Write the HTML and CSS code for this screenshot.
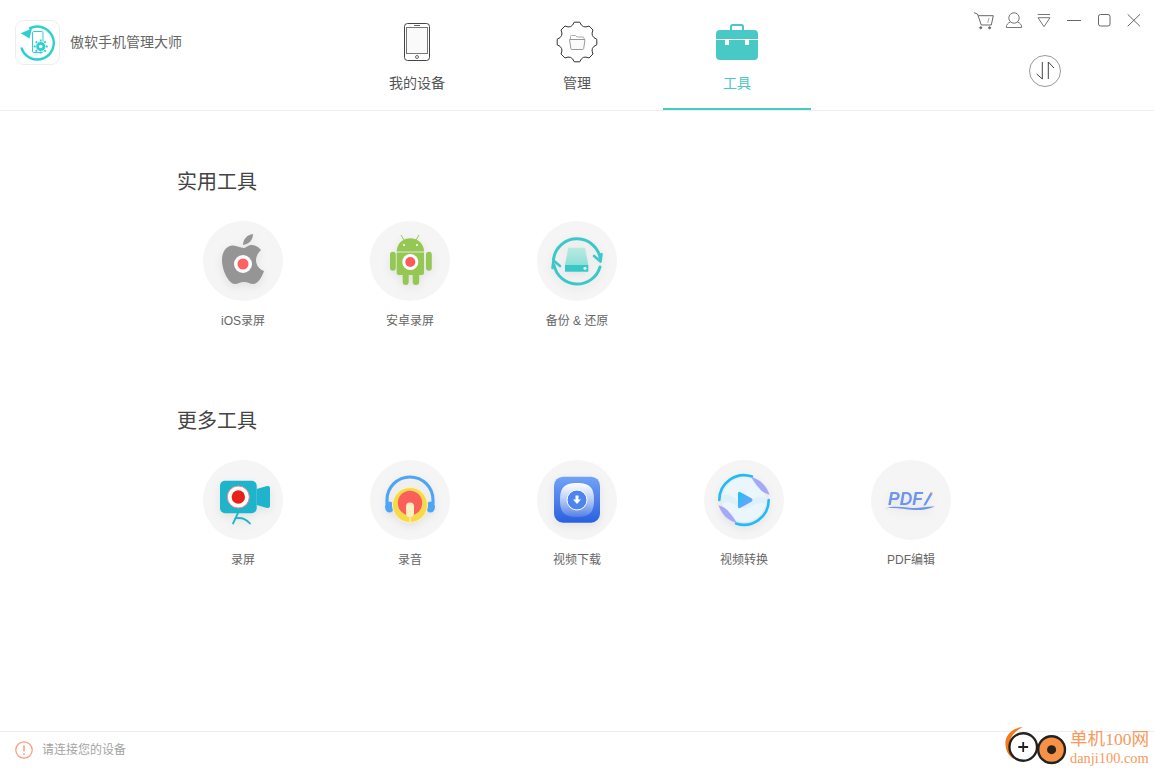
FILE: index.html
```html
<!DOCTYPE html>
<html lang="zh-CN">
<head>
    <meta charset="UTF-8">
    <title>傲软手机管理大师</title>
    <link rel="stylesheet" href="styles.css">
</head>
<body>

<div id="app">

    <!-- Top bar -->
    <header class="top-bar">
        <div class="brand">
            <div class="brand-logo">
                <svg width="45" height="45" viewBox="0 0 45 45" fill="none">
                    <path d="M15 8.2 A16.5 16.5 0 1 1 6.7 28.5" stroke="#2bd0d0" stroke-width="2.4" stroke-linecap="round"/>
                    <path d="M5.7 13.3 L17 8.5 L14.5 18.5 Z" fill="#2bd0d0"/>
                    <rect x="17.5" y="11.5" width="10.5" height="21" rx="1.2" stroke="#2bd0d0" stroke-width="1"/>
                    <circle cx="25.7" cy="26.5" r="5" fill="#2bd0d0" stroke="#fff" stroke-width="1"/>
                    <path d="M25.7 19.5v2M25.7 31.5v2M18.7 26.5h2M30.7 26.5h2M20.7 21.5l1.4 1.4M29.3 30.1l1.4 1.4M20.7 31.5l1.4-1.4M29.3 22.9l1.4-1.4" stroke="#2bd0d0" stroke-width="1.8"/>
                    <circle cx="25.7" cy="26.5" r="1.8" fill="#fff"/>
                </svg>
            </div>
            <span class="brand-name">傲软手机管理大师</span>
        </div>

        <nav class="tabs">
            <div class="tab">
                <svg class="tab-icon" viewBox="0 0 44 44" fill="none">
                    <rect x="9.5" y="3.5" width="25" height="37" rx="3" stroke="#444" stroke-width="1"/>
                    <rect x="11.5" y="7.5" width="21" height="26" fill="#fafafa" stroke="#777" stroke-width="1"/>
                    <path d="M19 5.5h6" stroke="#666" stroke-width="1"/>
                    <circle cx="22" cy="37" r="1.5" stroke="#666" stroke-width="1"/>
                </svg>
                <span>我的设备</span>
            </div>
            <div class="tab">
                <svg class="tab-icon" viewBox="0 0 44 44" fill="none">
                    <path d="M19.22 2.2 L24.78 2.2 Q27.36 9.06 34.04 6.03 L37.97 9.96 Q34.94 16.64 41.8 19.22 L41.8 24.78 Q34.94 27.36 37.97 34.04 L34.04 37.97 Q27.36 34.94 24.78 41.8 L19.22 41.8 Q16.64 34.94 9.96 37.97 L6.03 34.04 Q9.06 27.36 2.2 24.78 L2.2 19.22 Q9.06 16.64 6.03 9.96 L9.96 6.03 Q16.64 9.06 19.22 2.2 Z" fill="#fff" stroke="#333" stroke-width="1" stroke-linejoin="round"/>
                    <path d="M15.5 19 V16.5 Q15.5 15.5 16.5 15.5 H20.5 L22 17 H28 Q29 17 29 18 V19" stroke="#aaa" stroke-width="1"/>
                    <path d="M14.5 19.5 H30 L28.7 28.5 Q28.5 29.5 27.5 29.5 H17 Q16 29.5 15.8 28.5 Z" fill="#fafafa" stroke="#999" stroke-width="1" stroke-linejoin="round"/>
                </svg>
                <span>管理</span>
            </div>
            <div class="tab tab-active">
                <svg class="tab-icon" viewBox="0 0 44 44" fill="none">
                    <path d="M16 11 V6.5 Q16 5 17.5 5 H26.5 Q28 5 28 6.5 V11" stroke="#49c9c6" stroke-width="2"/>
                    <rect x="1" y="10" width="42" height="30" rx="4" fill="#49c9c6"/>
                    <path d="M1 19.5 H43" stroke="#fff" stroke-width="1"/>
                    <path d="M10 20h4v5h-4zM30 20h4v5h-4z" fill="#fff"/>
                </svg>
                <span>工具</span>
            </div>
        </nav>

        <div class="top-right">
            <div class="win-btns">
                <svg class="win-btn" viewBox="0 0 20 20" fill="none" stroke="#666" stroke-width="1">
                    <path d="M0 2.7 L3.5 4 L7.3 15 H17.3 L19.3 5.7 H4.4"/>
                    <path d="M15 8 L13.7 13" stroke="#aaa"/>
                    <circle cx="6.8" cy="17.8" r="1" fill="#666"/>
                    <circle cx="15.6" cy="17.8" r="1" fill="#666"/>
                </svg>
                <svg class="win-btn" viewBox="0 0 20 20" fill="none" stroke="#777" stroke-width="1">
                    <circle cx="10" cy="8" r="5.2"/>
                    <path d="M6.5 12 C4 13 2.3 14.5 2.3 17.5 H17.7 C17.7 14.5 16 13 13.5 12"/>
                </svg>
                <svg class="win-btn" viewBox="0 0 20 20" fill="none" stroke="#777" stroke-width="1">
                    <path d="M3.7 4.5 H16"/>
                    <path d="M4 7.7 H16 L10 16.7 Z"/>
                </svg>
                <svg class="win-btn" viewBox="0 0 20 20" fill="none" stroke="#666" stroke-width="1">
                    <path d="M3 10.5 H17"/>
                </svg>
                <svg class="win-btn" viewBox="0 0 20 20" fill="none" stroke="#666" stroke-width="1">
                    <rect x="4.5" y="4.5" width="11.5" height="11.5" rx="2"/>
                </svg>
                <svg class="win-btn" viewBox="0 0 20 20" fill="none" stroke="#666" stroke-width="1">
                    <path d="M3.7 4.3 L16 16.3 M16 4.3 L3.7 16.3"/>
                </svg>
            </div>
            <svg class="sync-btn" viewBox="0 0 32 32" fill="none">
                <circle cx="16" cy="16" r="15.5" stroke="#999" stroke-width="1"/>
                <path d="M13.3 7 V24 L7.7 19" stroke="#444" stroke-width="1"/>
                <path d="M19.3 24 V7 L25 13" stroke="#444" stroke-width="1"/>
            </svg>
        </div>
    </header>

    <!-- Tool lists -->
    <main class="content">
        <section class="tool-section">
            <h2 class="section-title">实用工具</h2>
            <div class="tool-grid">
                <div class="tool">
                    <div class="tool-circle">
                        <svg class="tool-icon" viewBox="0 0 80 80">
                            <path d="M41 27 C37 27 34 24.5 30 24.5 C23 24.5 19 31 19 39 C19 50 26 63 32 63 C35 63 37 61 41 61 C45 61 47 63 50 63 C55 63 59 56 61 50 C56 48 53 44 53 39 C53 35 55 32 58 29 C55 25 51 24 48 24 C45 24 43 27 41 27 Z" fill="#959595"/>
                            <path d="M40 24 C40 18 44 14 50 13 C50 19 46 23 40 24 Z" fill="#959595"/>
                            <circle cx="40" cy="43" r="9" fill="#fff"/>
                            <circle cx="40" cy="43" r="5.5" fill="#ff6060"/>
                        </svg>
                    </div>
                    <span class="tool-name">iOS录屏</span>
                </div>
                <div class="tool">
                    <div class="tool-circle">
                        <svg class="tool-icon" viewBox="0 0 80 80">
                            <path d="M31 14 L34 19 M49 14 L46 19" stroke="#95c753" stroke-width="1"/>
                            <path d="M26.7 30.5 C26.7 23 32.5 17.3 40.3 17.3 C48 17.3 54 23 54 30.5 Z" fill="#95c753"/>
                            <path d="M26.7 31.5 H54 V52 Q54 54 52 54 H28.7 Q26.7 54 26.7 52 Z" fill="#95c753"/>
                            <rect x="20" y="30.7" width="5.8" height="19" rx="2.9" fill="#95c753"/>
                            <rect x="56" y="30.7" width="5.8" height="19" rx="2.9" fill="#95c753"/>
                            <rect x="32.7" y="50" width="6" height="14" rx="3" fill="#95c753"/>
                            <rect x="42.7" y="50" width="6.5" height="14" rx="3" fill="#95c753"/>
                            <circle cx="34" cy="24" r="1" fill="#fff"/>
                            <circle cx="47" cy="24" r="1" fill="#fff"/>
                            <circle cx="40.3" cy="41" r="8" fill="#fff"/>
                            <circle cx="40.3" cy="41" r="5" fill="#ff5a5a"/>
                        </svg>
                    </div>
                    <span class="tool-name">安卓录屏</span>
                </div>
                <div class="tool">
                    <div class="tool-circle">
                        <svg class="tool-icon" viewBox="0 0 80 80" fill="none">
                            <defs>
                                <linearGradient id="driveTop" x1="0" y1="0" x2="0" y2="1">
                                    <stop offset="0" stop-color="#b8ebe4"/>
                                    <stop offset="1" stop-color="#8fdfd8"/>
                                </linearGradient>
                            </defs>
                            <path d="M16.5 38 A23.7 23.7 0 0 1 63.5 39" stroke="#3cc8c8" stroke-width="3" stroke-linecap="round"/>
                            <path d="M63 46 A23.7 23.7 0 0 1 17 44" stroke="#3cc8c8" stroke-width="3" stroke-linecap="round"/>
                            <path d="M57 35 L63.5 40.5 L64.5 33" stroke="#3cc8c8" stroke-width="2.6" stroke-linecap="round" stroke-linejoin="round"/>
                            <path d="M23 45 L16.5 39.5 L15.5 47" stroke="#3cc8c8" stroke-width="2.6" stroke-linecap="round" stroke-linejoin="round"/>
                            <path d="M31.3 26.7 H48 L51.3 44 H28 Z" fill="url(#driveTop)"/>
                            <rect x="28" y="44" width="23.3" height="6.7" fill="#35c8c8"/>
                            <circle cx="48" cy="47.3" r="1.5" fill="#fff"/>
                        </svg>
                    </div>
                    <span class="tool-name">备份 &amp; 还原</span>
                </div>
            </div>
        </section>

        <section class="tool-section">
            <h2 class="section-title">更多工具</h2>
            <div class="tool-grid">
                <div class="tool">
                    <div class="tool-circle">
                        <svg class="tool-icon" viewBox="0 0 80 80" fill="none">
                            <rect x="17" y="20.7" width="36.7" height="32.6" rx="5" fill="#1db4cc"/>
                            <path d="M53.7 29 L64 26 Q67 25.5 67 28 V46 Q67 48.5 64 48 L53.7 45 Z" fill="#1db4cc"/>
                            <circle cx="35.3" cy="37" r="11" fill="#fff" stroke="#e88a88" stroke-width="1"/>
                            <circle cx="35.3" cy="37" r="6.7" fill="#e8201a"/>
                            <path d="M35 53 L30 63.5 M32 58.5 C38 57 43 59 47 63.5" stroke="#1db4cc" stroke-width="1.8" stroke-linecap="round"/>
                        </svg>
                    </div>
                    <span class="tool-name">录屏</span>
                </div>
                <div class="tool">
                    <div class="tool-circle">
                        <svg class="tool-icon" viewBox="0 0 80 80" fill="none">
                            <path d="M17 44 V40 A23 23 0 0 1 63 40 V44" stroke="#4ea5f5" stroke-width="3.2"/>
                            <ellipse cx="19.5" cy="47" rx="4.5" ry="5.5" fill="#4ea5f5"/>
                            <ellipse cx="60.5" cy="47" rx="4.5" ry="5.5" fill="#4ea5f5"/>
                            <circle cx="40" cy="45" r="17.5" fill="#f7d94e" stroke="#fdf3b5" stroke-width="1"/>
                            <circle cx="40" cy="43" r="12.2" fill="#fa5f5a"/>
                            <rect x="36" y="42.5" width="8" height="14.5" rx="4" fill="#fdf0c0"/>
                            <path d="M40 56 V62" stroke="#fdf0c0" stroke-width="1.2"/>
                        </svg>
                    </div>
                    <span class="tool-name">录音</span>
                </div>
                <div class="tool">
                    <div class="tool-circle">
                        <svg class="tool-icon" viewBox="0 0 80 80" fill="none">
                            <defs>
                                <linearGradient id="dlBox" x1="0" y1="0" x2="0" y2="1">
                                    <stop offset="0" stop-color="#72a2f6"/>
                                    <stop offset="1" stop-color="#2a60df"/>
                                </linearGradient>
                                <linearGradient id="dlInner" x1="0" y1="0" x2="0" y2="1">
                                    <stop offset="0" stop-color="#fff"/>
                                    <stop offset="1" stop-color="#fff" stop-opacity="0.15"/>
                                </linearGradient>
                            </defs>
                            <rect x="17" y="16.7" width="46" height="46" rx="9" fill="url(#dlBox)"/>
                            <path d="M40 23 C53 23 57 28 57 40 C57 52 53 57 40 57 C27 57 23 52 23 40 C23 28 27 23 40 23 Z" fill="url(#dlInner)"/>
                            <circle cx="40" cy="40" r="10" fill="#4d84ee" stroke="#fff" stroke-width="1"/>
                            <path d="M38.5 35.5 H41.5 V39.5 H44 L40 44 L36 39.5 H38.5 Z" fill="#fff"/>
                        </svg>
                    </div>
                    <span class="tool-name">视频下载</span>
                </div>
                <div class="tool">
                    <div class="tool-circle">
                        <svg class="tool-icon" viewBox="0 0 80 80" fill="none">
                            <defs>
                                <linearGradient id="playFill" x1="0" y1="0" x2="1" y2="1">
                                    <stop offset="0" stop-color="#1ec0f8"/>
                                    <stop offset="1" stop-color="#7f9cf8"/>
                                </linearGradient>
                            </defs>
                            <circle cx="40" cy="40" r="22" fill="#eaf5fc"/>
                            <path d="M18 36 C26 30 32 44 42 42 C50 40 54 34 62 38 V44 C52 40 50 48 40 48 C32 48 26 38 18 44 Z" fill="#dff0fa"/>
                            <path d="M15.3 40 A24.7 24.7 0 0 1 48 16.6" stroke="#1ebcf8" stroke-width="2.6" stroke-linecap="round"/>
                            <path d="M64.7 40 A24.7 24.7 0 0 1 32 63.4" stroke="#1ebcf8" stroke-width="2.6" stroke-linecap="round"/>
                            <path d="M47 17 C56 19 63 26 65.5 35 L60 32.5 C56 30 52 25 47 17 Z" fill="#a5a8f8"/>
                            <path d="M33 63 C24 61 17 54 14.5 45 L20 47.5 C24 50 28 55 33 63 Z" fill="#a5a8f8"/>
                            <path d="M34 33.5 Q34 31 36.5 32.2 L47.5 38.3 Q49.5 40 47.5 41.7 L36.5 47.8 Q34 49 34 46.5 Z" fill="url(#playFill)"/>
                        </svg>
                    </div>
                    <span class="tool-name">视频转换</span>
                </div>
                <div class="tool">
                    <div class="tool-circle">
                        <svg class="tool-icon" viewBox="0 0 80 80" fill="none">
                            <text x="17" y="45" class="pdf-mark" textLength="35" lengthAdjust="spacingAndGlyphs">PDF</text>
                            <path d="M53 44 L59.5 32.5 L61.5 33.7 L55 45 L52.5 46 Z" fill="#6f96ee"/>
                            <path d="M59.5 32.5 L61.5 33.7" stroke="#f5a04a" stroke-width="1.4"/>
                            <path d="M14 48.5 C25 45 33 48 43 48 C50 48 57 46 64 46.5 C56 49.5 50 50.5 43 50 C33 49.5 25 47 14 48.5 Z" fill="#6f96ee"/>
                        </svg>
                    </div>
                    <span class="tool-name">PDF编辑</span>
                </div>
            </div>
        </section>
    </main>

    <!-- Status bar -->
    <footer class="status-bar">
        <svg class="status-icon" viewBox="0 0 18 18" fill="none">
            <circle cx="9" cy="9" r="8.2" stroke="#f99a7d" stroke-width="1.2"/>
            <path d="M9 4.5 V10.5" stroke="#f99a7d" stroke-width="1.5"/>
            <circle cx="9" cy="13" r="0.9" fill="#f99a7d"/>
        </svg>
        <span class="status-text">请连接您的设备</span>
    </footer>

    <!-- Watermark over the corner -->
    <div class="watermark">
        <svg class="watermark-logo" viewBox="0 0 66 42" fill="none">
            <path d="M18 0.8 C6 2 0 10 0.4 18 C0.8 26 5 32 10 33.5 C6 28 4.5 23 5 17 C5.5 10 10 5 18 0.8 Z" fill="#f47a1c"/>
            <circle cx="18.5" cy="21" r="14" fill="#fff" stroke="#222" stroke-width="2.4"/>
            <path d="M18.5 16 V26 M13.5 21 H23.5" stroke="#222" stroke-width="1.8"/>
            <circle cx="47.3" cy="23.7" r="13.6" fill="#f79145" stroke="#222" stroke-width="2.4"/>
            <circle cx="47.3" cy="23.7" r="4.6" fill="#2a211c"/>
        </svg>
        <div class="watermark-text">
            <span class="watermark-name">单机100网</span>
            <span class="watermark-url">danji100.com</span>
        </div>
    </div>

</div>

</body>
</html>
```

FILE: styles.css
```css
/* General */
html, body {
    margin: 0;
    padding: 0;
    height: 100%;
    background-color: #fff;
    overflow: hidden;
}

body {
    font-family: "Liberation Sans", "Noto Sans CJK SC", sans-serif;
    color: #555;
}

#app {
    position: relative;
    height: 768px;
    display: flex;
    flex-direction: column;
}

/* Top bar */
.top-bar {
    height: 110px;
    flex: none;
    display: flex;
    border-bottom: 1px solid #eaf0f0;
}

.brand {
    width: 343px;
    flex: none;
    box-sizing: border-box;
    padding: 20px 0 0 15px;
    display: flex;
    align-items: flex-start;
    gap: 10px;
}

.brand-logo {
    width: 45px;
    height: 45px;
    box-sizing: border-box;
    border: 1px solid #eeeeee;
    border-radius: 9px;
}

.brand-logo svg {
    display: block;
    margin: -1px;
}

.brand-name {
    font-size: 14px;
    line-height: 44px;
    color: #666;
}

/* Tabs */
.tabs {
    display: flex;
    gap: 12px;
}

.tab {
    width: 148px;
    height: 110px;
    box-sizing: border-box;
    padding-top: 20px;
    display: flex;
    flex-direction: column;
    align-items: center;
    font-size: 14px;
    line-height: 20px;
    color: #555;
}

.tab-icon {
    width: 44px;
    height: 44px;
    margin-bottom: 9px;
}

.tab-active {
    color: #49c9c6;
    border-bottom: 2px solid #49c9c6;
}

/* Right side of the top bar */
.top-right {
    margin-left: auto;
    width: 185px;
    padding-top: 10px;
}

.win-btns {
    display: flex;
}

.win-btn {
    width: 20px;
    height: 20px;
    padding: 0 5px;
    box-sizing: content-box;
}

.sync-btn {
    display: block;
    width: 32px;
    height: 32px;
    margin: 25px 0 0 60px;
}

/* Tool lists */
.content {
    flex: 1;
    padding: 56px 0 0 177px;
}

.tool-section {
    margin-bottom: 77px;
}

.section-title {
    margin: 0 0 24px;
    font-size: 20px;
    line-height: 30px;
    font-weight: 400;
    color: #444;
}

.tool-grid {
    display: flex;
    gap: 87px;
    padding-left: 26px;
}

.tool {
    width: 80px;
    display: flex;
    flex-direction: column;
    align-items: center;
}

.tool-circle {
    width: 80px;
    height: 80px;
    border-radius: 50%;
    background-color: #f5f5f5;
}

.tool-icon {
    display: block;
    width: 80px;
    height: 80px;
    filter: drop-shadow(0 3px 4px rgba(0, 0, 0, 0.08));
}

.tool-name {
    margin-top: 12px;
    font-size: 12px;
    line-height: 16px;
    color: #666;
    white-space: nowrap;
}

.pdf-mark {
    font-family: "Liberation Sans", sans-serif;
    font-size: 18px;
    font-weight: 700;
    font-style: italic;
    fill: #6f96ee;
}

/* Status bar */
.status-bar {
    height: 36px;
    flex: none;
    box-sizing: content-box;
    border-top: 1px solid #eeeeee;
    padding-left: 15px;
    display: flex;
    align-items: center;
    gap: 9px;
    font-size: 12px;
    color: #a3a3a3;
}

.status-icon {
    width: 18px;
    height: 18px;
}

.status-text {
    line-height: 36px;
}

/* Watermark */
.watermark {
    position: absolute;
    right: 0;
    bottom: 0;
    width: 149px;
    height: 42px;
    display: flex;
}

.watermark-logo {
    width: 65px;
    height: 42px;
    flex: none;
}

.watermark-text {
    display: flex;
    flex-direction: column;
    padding-top: 1px;
    color: #f79a5c;
    font-family: "Liberation Serif", "Noto Sans CJK SC", serif;
}

.watermark-name {
    font-size: 17.6px;
    line-height: 24px;
    white-space: nowrap;
}

.watermark-url {
    font-size: 14.4px;
    line-height: 14px;
    white-space: nowrap;
}
```
